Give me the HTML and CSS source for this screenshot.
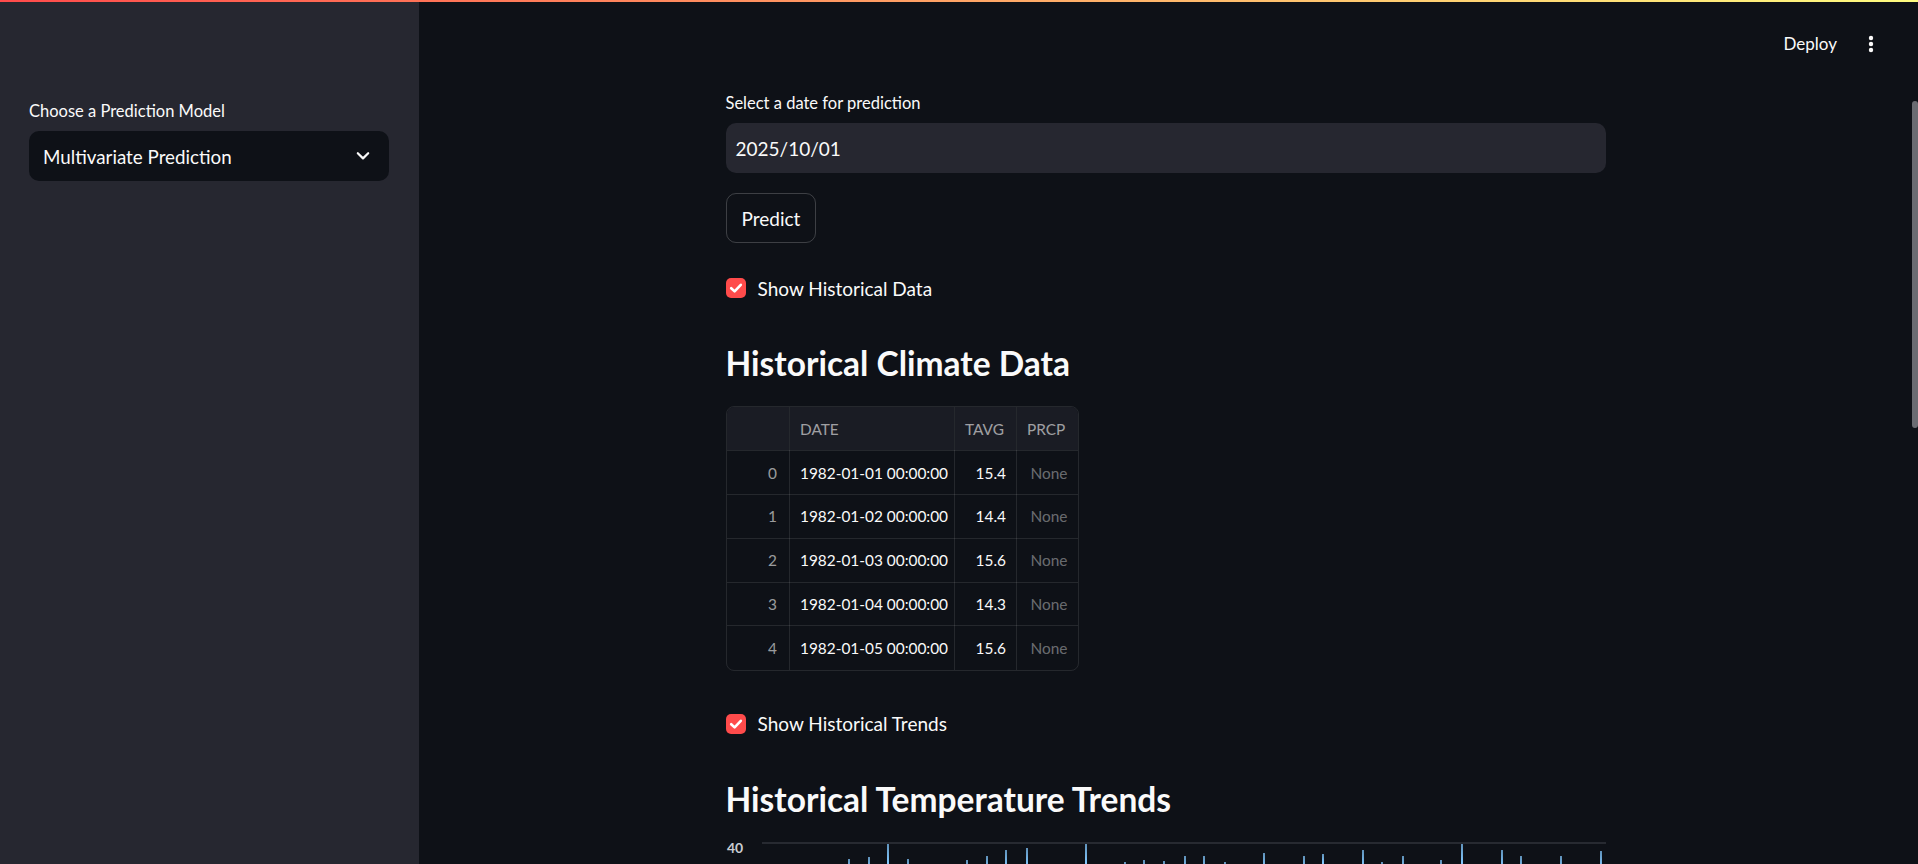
FILE: index.html
```html
<!DOCTYPE html>
<html lang="en">
<head>
<meta charset="utf-8">
<title>Climate Prediction</title>
<link rel="stylesheet" href="styles.css">
</head>
<body>
<div class="decoration"></div>
<aside class="sidebar">
  <div class="widget">
    <label class="widget-label">Choose a Prediction Model</label>
    <div class="select">
      <span>Multivariate Prediction</span>
      <svg class="chevron" viewBox="0 0 16 16" width="16" height="16"><path d="M2.8 5.2 L8 10.4 L13.2 5.2" fill="none" stroke="#fafafa" stroke-width="2.2" stroke-linecap="round" stroke-linejoin="round"/></svg>
    </div>
  </div>
</aside>
<div class="main">
  <header class="toolbar">
    <span class="deploy">Deploy</span>
    <svg class="kebab" viewBox="0 0 24 25" width="24" height="25"><circle cx="12" cy="7" r="2.2" fill="#fafafa"/><circle cx="12" cy="13" r="2.2" fill="#fafafa"/><circle cx="12" cy="19" r="2.2" fill="#fafafa"/></svg>
  </header>
  <section class="scroll">
    <div class="block">
      <div class="widget">
        <label class="widget-label">Select a date for prediction</label>
        <div class="input">2025/10/01</div>
      </div>
      <button class="btn">Predict</button>
      <div class="check">
        <span class="box"><svg viewBox="0 0 20 20" width="20" height="20"><path d="M5.2 10.2 L8.6 13.4 L14.8 6.8" fill="none" stroke="#fff" stroke-width="2.6" stroke-linecap="round" stroke-linejoin="round"/></svg></span>
        <span>Show Historical Data</span>
      </div>
      <h3 class="heading">Historical Climate Data</h3>
      <div class="df">
        <table>
          <colgroup><col class="c-idx"><col class="c-date"><col class="c-tavg"><col class="c-prcp"></colgroup>
          <thead><tr><th></th><th>DATE</th><th>TAVG</th><th>PRCP</th></tr></thead>
          <tbody>
            <tr><td class="idx">0</td><td>1982-01-01 00:00:00</td><td class="num">15.4</td><td class="none">None</td></tr>
            <tr><td class="idx">1</td><td>1982-01-02 00:00:00</td><td class="num">14.4</td><td class="none">None</td></tr>
            <tr><td class="idx">2</td><td>1982-01-03 00:00:00</td><td class="num">15.6</td><td class="none">None</td></tr>
            <tr><td class="idx">3</td><td>1982-01-04 00:00:00</td><td class="num">14.3</td><td class="none">None</td></tr>
            <tr><td class="idx">4</td><td>1982-01-05 00:00:00</td><td class="num">15.6</td><td class="none">None</td></tr>
          </tbody>
        </table>
      </div>
      <div class="check">
        <span class="box"><svg viewBox="0 0 20 20" width="20" height="20"><path d="M5.2 10.2 L8.6 13.4 L14.8 6.8" fill="none" stroke="#fff" stroke-width="2.6" stroke-linecap="round" stroke-linejoin="round"/></svg></span>
        <span>Show Historical Trends</span>
      </div>
      <h3 class="heading">Historical Temperature Trends</h3>
      <svg class="chart" viewBox="0 0 880 400" width="880" height="400">
        <text x="1" y="13" class="axis-label">40</text>
        <line x1="36" y1="3" x2="880" y2="3" class="grid"/>
        <path class="series" d="M36 80 L121.8 80 L123 19 L124.2 80 L141.8 80 L143 17 L144.2 80 L160.8 80 L162 4 L163.2 80 L180.8 80 L182 19 L183.2 80 L199.8 80 L201 29 L202.2 80 L219.8 80 L221 27 L222.2 80 L239.8 80 L241 20 L242.2 80 L259.8 80 L261 16 L262.2 80 L278.8 80 L280 10 L281.2 80 L299.8 80 L301 8 L302.2 80 L318.8 80 L320 25 L321.2 80 L338.8 80 L340 27 L341.2 80 L358.8 80 L360 4 L361.2 80 L377.8 80 L379 25 L380.2 80 L397.8 80 L399 22 L400.2 80 L416.8 80 L418 20 L419.2 80 L436.8 80 L438 21 L439.2 80 L457.8 80 L459 16 L460.2 80 L476.8 80 L478 16 L479.2 80 L497.8 80 L499 22 L500.2 80 L516.8 80 L518 25 L519.2 80 L536.8 80 L538 13 L539.2 80 L556.8 80 L558 25 L559.2 80 L576.8 80 L578 16 L579.2 80 L594.8 80 L597 14 L599.2 80 L615.8 80 L617 25 L618.2 80 L635.8 80 L637 10 L638.2 80 L654.8 80 L656 22 L657.2 80 L675.8 80 L677 16 L678.2 80 L694.8 80 L696 25 L697.2 80 L713.8 80 L715 20 L716.2 80 L734.8 80 L736 4 L737.2 80 L753.8 80 L755 25 L756.2 80 L774.8 80 L776 10 L777.2 80 L793.8 80 L795 16 L796.2 80 L813.8 80 L815 25 L816.2 80 L833.8 80 L835 16 L836.2 80 L853.8 80 L855 25 L856.2 80 L873.8 80 L875 11 L876.2 80 L880 80"/>
      </svg>
    </div>
  </section>
  <div class="scroll-thumb"></div>
</div>
</body>
</html>
```

FILE: styles.css
```css
* { box-sizing: border-box; }

html, body {
  margin: 0;
  height: 100%;
}

body {
  display: flex;
  background: #0e1117;
  color: #fafafa;
  font-family: Lato, "Noto Sans", sans-serif;
  overflow: hidden;
}

.decoration {
  position: fixed;
  top: 0;
  left: 0;
  right: 0;
  height: 2px;
  background: linear-gradient(90deg, #ff4b4b, #fffd80);
  z-index: 10;
}

.sidebar {
  width: 419px;
  flex: none;
  background: #262730;
  padding: 99px 30px 0 29px;
}

.widget-label {
  display: block;
  font-size: 16.5px;
  line-height: 25px;
  margin-bottom: 7px;
}

.sidebar .widget-label { margin-bottom: 7px; }

.select {
  height: 50px;
  background: #0e1117;
  border-radius: 10px;
  display: flex;
  align-items: center;
  justify-content: space-between;
  padding: 0 18px 0 14px;
  font-size: 18.8px;
}

.chevron { display: block; }

.main {
  position: relative;
  flex: 1;
  display: flex;
  flex-direction: column;
  min-width: 0;
}

.toolbar {
  height: 75px;
  flex: none;
  display: flex;
  justify-content: flex-end;
  align-items: flex-start;
  gap: 22px;
  padding: 31px 35px 0 0;
}

.deploy {
  font-size: 17px;
  line-height: 25px;
}

.kebab { display: block; }

.scroll {
  flex: 1;
  overflow-y: auto;
  padding-right: 6px;
  scrollbar-width: none;
}

.scroll-thumb {
  position: absolute;
  top: 101px;
  right: 0;
  width: 6px;
  height: 327px;
  border-radius: 3px;
  background: #6b6c72;
}

.block {
  width: 880px;
  margin: 0 auto;
  padding-top: 16px;
  min-height: 1841px;
  display: flex;
  flex-direction: column;
  gap: 20px;
}

.input {
  height: 50px;
  background: #262730;
  border-radius: 10px;
  padding: 0 10px;
  display: flex;
  align-items: center;
  font-size: 19px;
}

.btn {
  align-self: flex-start;
  height: 50px;
  padding: 0 15px;
  border: 1px solid rgba(250, 250, 250, 0.2);
  border-radius: 10px;
  background: transparent;
  color: #fafafa;
  font-family: inherit;
  font-size: 19px;
}

.check {
  height: 50px;
  display: flex;
  align-items: center;
  gap: 12px;
  font-size: 19px;
}

.box {
  width: 20px;
  height: 20px;
  border-radius: 5px;
  background: #ff4b4b;
  display: flex;
}

.heading {
  margin: 0;
  padding: 9px 0 2px;
  font-size: 33.5px;
  line-height: 42px;
  font-weight: 700;
}

.df {
  align-self: flex-start;
  border: 1px solid rgba(250, 250, 250, 0.1);
  border-radius: 8px;
  overflow: hidden;
  margin-bottom: 8px;
}

.df table {
  border-collapse: collapse;
  table-layout: fixed;
  width: 351px;
  font-size: 15.4px;
}

.c-idx { width: 63px; }
.c-date { width: 165px; }
.c-tavg { width: 62px; }
.c-prcp { width: 61px; }

.df th, .df td {
  height: 43.8px;
  padding: 0 10px;
  white-space: nowrap;
  overflow: hidden;
  border-right: 1px solid rgba(250, 250, 250, 0.1);
  border-bottom: 1px solid rgba(250, 250, 250, 0.1);
}

.df th:last-child, .df td:last-child { border-right: none; }
.df tbody tr:last-child td { border-bottom: none; }

.df th {
  background: #1a1c24;
  font-weight: 400;
  color: rgba(250, 250, 250, 0.6);
  text-align: left;
}

.df td.idx {
  text-align: right;
  padding-right: 12px;
  color: rgba(250, 250, 250, 0.6);
}

.df td.num { text-align: right; }

.df td.none {
  text-align: right;
  color: rgba(250, 250, 250, 0.4);
}

.chart {
  display: block;
  flex: none;
  margin-top: -2px;
}

.axis-label {
  fill: #c9ccd2;
  font-size: 14px;
  font-weight: 700;
  font-family: Lato, "Noto Sans", sans-serif;
}

.grid {
  stroke: #31333b;
  stroke-width: 1.5;
}

.series {
  fill: none;
  stroke: #83c9ff;
  stroke-width: 1.4;
  stroke-linejoin: miter;
}
```
